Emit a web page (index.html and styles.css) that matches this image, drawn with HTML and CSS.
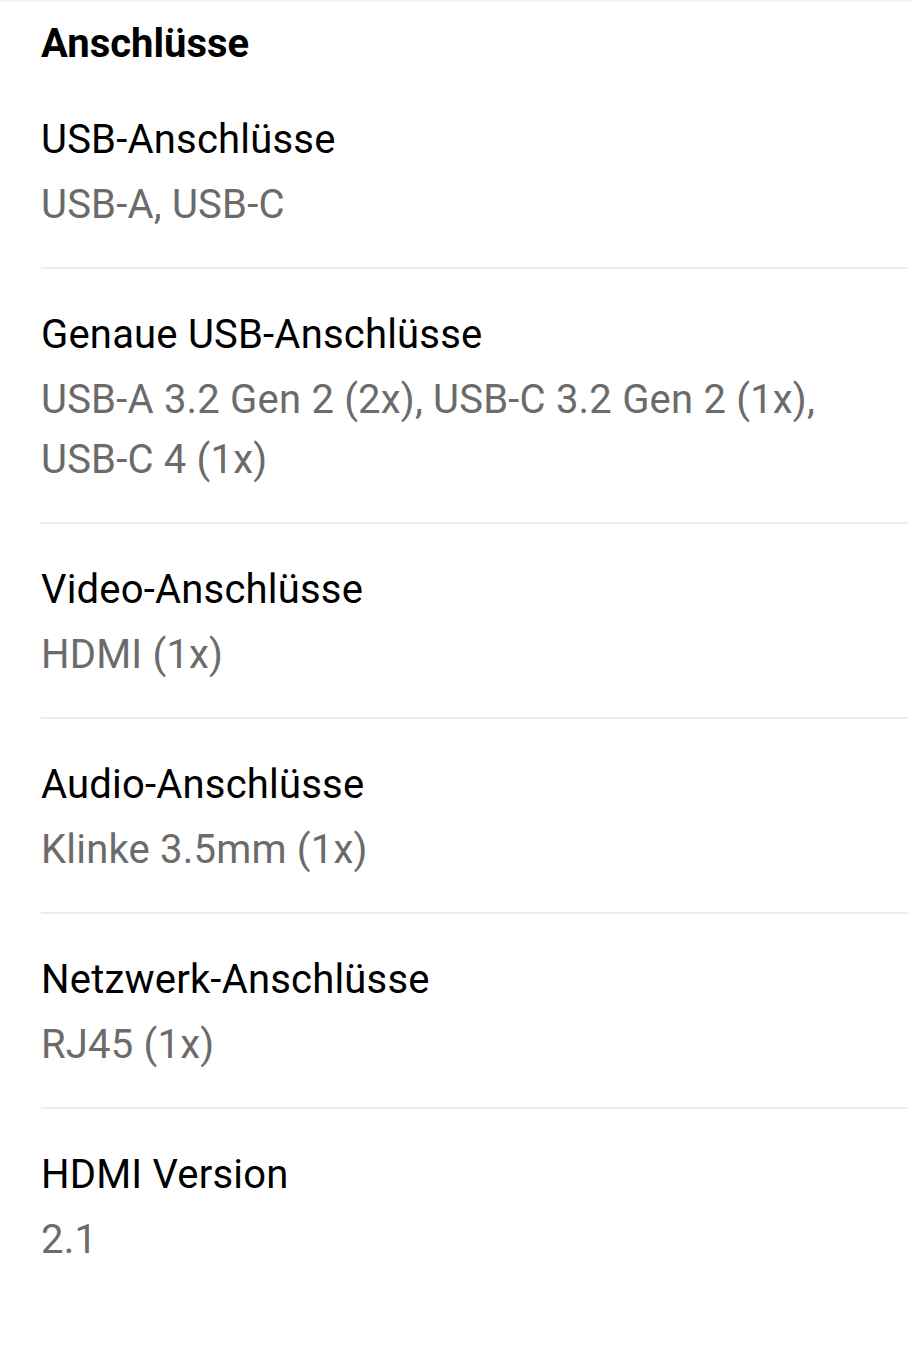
FILE: index.html
```html
<!DOCTYPE html>
<html lang="de">
<head>
<meta charset="utf-8">
<title>Anschlüsse</title>
<link rel="stylesheet" href="styles.css">
</head>
<body>
<div class="page">
  <h2 class="title">Anschlüsse</h2>
  <dl class="specs">
    <div class="row">
      <dt class="label">USB-Anschlüsse</dt>
      <dd class="value">USB-A, USB-C</dd>
    </div>
    <div class="row">
      <dt class="label">Genaue USB-Anschlüsse</dt>
      <dd class="value">USB-A 3.2 Gen 2 (2x), USB-C 3.2 Gen 2 (1x), USB-C 4 (1x)</dd>
    </div>
    <div class="row">
      <dt class="label">Video-Anschlüsse</dt>
      <dd class="value">HDMI (1x)</dd>
    </div>
    <div class="row">
      <dt class="label">Audio-Anschlüsse</dt>
      <dd class="value">Klinke 3.5mm (1x)</dd>
    </div>
    <div class="row">
      <dt class="label">Netzwerk-Anschlüsse</dt>
      <dd class="value">RJ45 (1x)</dd>
    </div>
    <div class="row last">
      <dt class="label">HDMI Version</dt>
      <dd class="value">2.1</dd>
    </div>
  </dl>
</div>
</body>
</html>
```

FILE: styles.css
```css
html, body {
  margin: 0;
  padding: 0;
  background: #ffffff;
}
.page {
  font-family: Roboto, "Noto Sans", sans-serif;
  border-top: 2px solid #f2f2f2;
  padding-left: 41px;
  padding-right: 5px;
  min-height: 1348px;
  box-sizing: border-box;
}
.title {
  margin: 0;
  padding-top: 18px;
  font-size: 40px;
  line-height: 48px;
  font-weight: 700;
  color: #000;
}
.specs {
  margin: 6px 0 0 0;
}
.row {
  padding: 41px 0 32px 0;
  border-bottom: 2px solid #e9edf0;
}
.row.last {
  border-bottom: none;
}
.label {
  margin: 0;
  font-size: 40px;
  line-height: 50px;
  letter-spacing: 0.2px;
  color: #000;
}
.value {
  margin: 10px 0 0 0;
  font-size: 40px;
  line-height: 60px;
  letter-spacing: 0.2px;
  color: #6b6b6b;
  max-width: 820px;
}
```
